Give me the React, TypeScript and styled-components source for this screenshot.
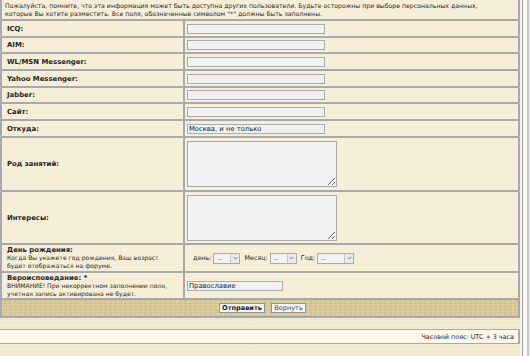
import styled, { createGlobalStyle } from 'styled-components'

const GlobalStyle = createGlobalStyle`
  html, body {
    margin: 0;
    padding: 0;
    background: #f3ead2;
  }
  body {
    font-family: 'DejaVu Sans', Verdana, sans-serif;
    color: #1e1e1e;
  }
`

const Page = styled.div`
  display: flex;
  width: 530px;
  height: 356px;
  overflow: hidden;
  background-color: #f3ead2;
  background-image: repeating-linear-gradient(0deg, rgba(160, 130, 70, 0.05) 0 1px, transparent 1px 4px);
`

const Main = styled.div`
  display: flex;
  flex-direction: column;
  width: 520px;
  flex: 0 0 520px;
`

// frame lines at the right edge of the page
const Rail = styled.div`
  flex: 0 0 10px;
  background: linear-gradient(
    to right,
    #f8f4e8 0 2px,
    #9ea1a8 2px 3px,
    #fbf8ef 3px 7px,
    #c6c6d6 7px 9px,
    #f3ead2 9px 10px
  );
`

const Form = styled.div`
  display: grid;
  grid-template-columns: 181px 333px;
  gap: 2px;
  background: #a6a9af;
  border-left: 2px solid #a6a9af;
  border-right: 2px solid #a6a9af;
  border-bottom: 2px solid #a6a9af;
`

const Intro = styled.div`
  grid-column: 1 / -1;
  height: 19px;
  box-sizing: border-box;
  padding: 2px 3px 0;
  background: #f6eed6;
  font-size: 6.2px;
  line-height: 8.3px;
  white-space: nowrap;
  color: #2a2a2a;
`

const Label = styled.div<{ $h: number }>`
  height: ${(p) => p.$h}px;
  box-sizing: border-box;
  display: flex;
  flex-direction: column;
  justify-content: center;
  padding: 0 3px 0 5px;
  background: #f6eed6;
`

const LabelTitle = styled.span`
  font-size: 6.9px;
  font-weight: bold;
  line-height: 8px;
`

const LabelNote = styled.span`
  font-size: 6.1px;
  line-height: 7.6px;
  white-space: nowrap;
  color: #2a2a2a;
`

const Field = styled.div`
  display: flex;
  align-items: center;
  padding-left: 2px;
  background: #f6eed6;
`

const TextInput = styled.input<{ $w: number }>`
  box-sizing: border-box;
  width: ${(p) => p.$w}px;
  height: 10px;
  margin: 0;
  padding: 0 1px;
  border: 1px solid #a9abaf;
  background: #f0f1f3;
  font-family: 'DejaVu Sans', Verdana, sans-serif;
  font-size: 6.8px;
  color: #222;
  outline: none;
`

const TextArea = styled.textarea`
  box-sizing: border-box;
  width: 150px;
  height: 46px;
  margin: 0;
  padding: 1px;
  border: 1px solid #a9abaf;
  background: #f0f1f3;
  font-family: 'DejaVu Sans', Verdana, sans-serif;
  font-size: 7px;
  outline: none;
`

const DateText = styled.span`
  font-size: 6.4px;
  color: #2a2a2a;
  margin-right: 2px;
`

const DateGroup = styled.div`
  display: flex;
  align-items: center;
  margin-left: 6px;
`

const Select = styled.span<{ $w: number }>`
  box-sizing: border-box;
  display: inline-flex;
  width: ${(p) => p.$w}px;
  height: 11px;
  border: 1px solid #a9abaf;
  background: #f3f3f4;
  margin-right: 4px;
`

const SelectValue = styled.span`
  flex: 1;
  font-size: 6px;
  line-height: 9px;
  padding-left: 3px;
  color: #555;
`

const SelectArrow = styled.span`
  width: 8px;
  display: flex;
  align-items: center;
  justify-content: center;
  border-left: 1px solid #c4c6ca;
  background: #e9eaec;
`

const ButtonBar = styled.div`
  grid-column: 1 / -1;
  height: 16px;
  display: flex;
  align-items: center;
  justify-content: center;
  gap: 6px;
  padding-left: 5px;
  background-color: #d9c897;
  background-image:
    repeating-linear-gradient(90deg, rgba(255, 250, 230, 0.12) 0 2px, transparent 2px 5px),
    repeating-linear-gradient(0deg, rgba(120, 90, 40, 0.08) 0 1px, transparent 1px 3px);
`

const Button = styled.button<{ $bold?: boolean; $w: number }>`
  box-sizing: border-box;
  width: ${(p) => p.$w}px;
  height: 10px;
  margin: 0;
  padding: 0;
  border: 1px solid #8f9196;
  background: #f7f7f5;
  font-family: 'DejaVu Sans', Verdana, sans-serif;
  font-size: 6.6px;
  line-height: 8px;
  font-weight: ${(p) => (p.$bold ? 'bold' : 'normal')};
  color: ${(p) => (p.$bold ? '#1a1a1a' : '#444')};
`

const Footer = styled.div`
  margin-top: 11px;
  height: 15px;
  box-sizing: border-box;
  display: flex;
  align-items: center;
  justify-content: flex-end;
  padding-right: 4px;
  border-top: 1px solid #a6a9af;
  border-bottom: 1px solid #a6a9af;
  border-right: 2px solid #a6a9af;
  background: #faf6ea;
  font-size: 6.4px;
  color: #2a2a2a;
`

const Chevron = () => (
  <svg width="5" height="4" viewBox="0 0 5 4">
    <path d="M0.5 0.8 L2.5 3 L4.5 0.8" fill="none" stroke="#7a7c80" strokeWidth="0.9" />
  </svg>
)

const DateSelect = ({ w }: { w: number }) => (
  <Select $w={w}>
    <SelectValue>--</SelectValue>
    <SelectArrow>
      <Chevron />
    </SelectArrow>
  </Select>
)

const contacts = [
  { label: 'ICQ:', h: 15 },
  { label: 'AIM:', h: 14 },
  { label: 'WL/MSN Messenger:', h: 15 },
  { label: 'Yahoo Messenger:', h: 15 },
  { label: 'Jabber:', h: 14 },
  { label: 'Сайт:', h: 15 },
  { label: 'Откуда:', h: 15, value: 'Москва, и не только' },
]

const App = () => (
  <>
    <GlobalStyle />
    <Page>
      <Main>
        <Form>
          <Intro>
            Пожалуйста, помните, что эта информация может быть доступна других пользователи. Будьте осторожны при выборе персональных данных,
            <br />
            которые Вы хотите разместить. Все поля, обозначенные символом "*" должны быть заполнены.
          </Intro>

          {contacts.map((c) => [
            <Label key={c.label} $h={c.h}>
              <LabelTitle>{c.label}</LabelTitle>
            </Label>,
            <Field key={c.label + '-f'}>
              <TextInput $w={138} defaultValue={c.value ?? ''} />
            </Field>,
          ])}

          <Label $h={52}>
            <LabelTitle>Род занятий:</LabelTitle>
          </Label>
          <Field>
            <TextArea />
          </Field>

          <Label $h={51}>
            <LabelTitle>Интересы:</LabelTitle>
          </Label>
          <Field>
            <TextArea />
          </Field>

          <Label $h={26}>
            <LabelTitle>День рождения:</LabelTitle>
            <LabelNote>
              Когда Вы укажете год рождения, Ваш возраст
              <br />
              будет отображаться на форуме.
            </LabelNote>
          </Label>
          <Field>
            <DateGroup>
              <DateText>день:</DateText>
              <DateSelect w={27} />
              <DateText>Месяц:</DateText>
              <DateSelect w={27} />
              <DateText>Год:</DateText>
              <DateSelect w={37} />
            </DateGroup>
          </Field>

          <Label $h={25}>
            <LabelTitle>Вероисповедание: *</LabelTitle>
            <LabelNote>
              ВНИМАНИЕ! При некорректном заполнении поля,
              <br />
              учетная запись активирована не будет.
            </LabelNote>
          </Label>
          <Field>
            <TextInput $w={96} defaultValue="Православие" />
          </Field>

          <ButtonBar>
            <Button $bold $w={46}>Отправить</Button>
            <Button $w={35}>Вернуть</Button>
          </ButtonBar>
        </Form>
        <Footer>Часовой пояс: UTC + 3 часа</Footer>
      </Main>
      <Rail />
    </Page>
  </>
)

export default App
